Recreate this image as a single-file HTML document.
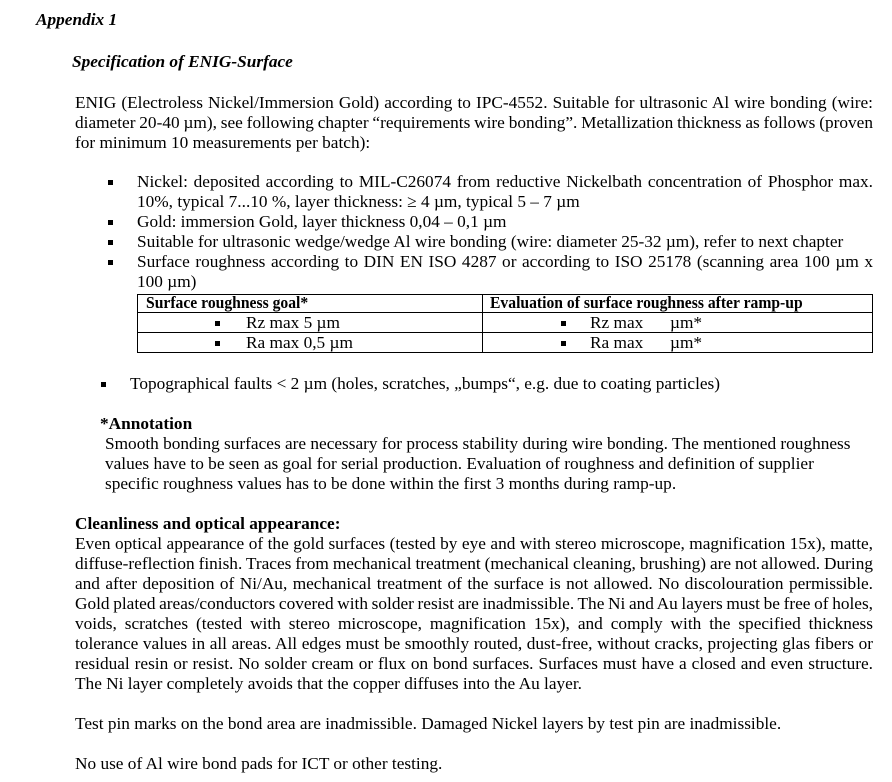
<!DOCTYPE html>
<html><head><meta charset="utf-8"><style>
body{margin:0;width:892px;height:782px;background:#fff;position:relative;overflow:hidden;font-family:"Liberation Serif",serif;font-size:17.3px;color:#000}
.l{position:absolute;white-space:nowrap;line-height:20px;height:20px}
.j{white-space:normal;text-align:justify;text-align-last:justify;overflow:hidden;word-spacing:-3px}
.b{position:absolute;width:5px;height:5px;background:#000}
.bi{font-weight:bold;font-style:italic}
.tb{position:absolute;left:137px;top:294px;width:736px;height:59px;border:1.5px solid #000;box-sizing:border-box}
.hl{position:absolute;left:137px;width:736px;height:0;border-top:1.5px solid #000}
.vl{position:absolute;left:482px;top:294px;height:59px;border-left:1.5px solid #000}
</style></head><body>
<div class="l bi" style="left:36px;top:10px">Appendix 1</div>
<div class="l bi" style="left:72px;top:52px">Specification of ENIG-Surface</div>

<div class="l j" style="left:75px;top:93px;width:798px">ENIG (Electroless Nickel/Immersion Gold) according to IPC-4552. Suitable for ultrasonic Al wire bonding (wire:</div>
<div class="l j" style="left:75px;top:113px;width:798px">diameter 20-40 µm), see following chapter “requirements wire bonding”. Metallization thickness as follows (proven</div>
<div class="l" style="left:75px;top:133px">for minimum 10 measurements per batch):</div>

<div class="b" style="left:108px;top:180px"></div>
<div class="l j" style="left:137px;top:172px;width:736px">Nickel: deposited according to MIL-C26074 from reductive Nickelbath concentration of Phosphor max.</div>
<div class="l" style="left:137px;top:192px">10%, typical 7...10 %, layer thickness: ≥ 4 µm, typical 5 – 7 µm</div>
<div class="b" style="left:108px;top:220px"></div>
<div class="l" style="left:137px;top:212px">Gold: immersion Gold, layer thickness 0,04 – 0,1 µm</div>
<div class="b" style="left:108px;top:240px"></div>
<div class="l" style="left:137px;top:232px">Suitable for ultrasonic wedge/wedge Al wire bonding (wire: diameter 25-32 µm), refer to next chapter</div>
<div class="b" style="left:108px;top:260px"></div>
<div class="l j" style="left:137px;top:252px;width:736px">Surface roughness according to DIN EN ISO 4287 or according to ISO 25178 (scanning area 100 µm x</div>
<div class="l" style="left:137px;top:272px">100 µm)</div>

<div class="tb"></div>
<div class="hl" style="top:312px"></div>
<div class="hl" style="top:332px"></div>
<div class="vl"></div>
<div class="l" style="left:146px;top:293px;font-weight:bold;font-size:17px"><span style="display:inline-block;transform:scaleX(0.92);transform-origin:left">Surface roughness goal*</span></div>
<div class="l" style="left:490px;top:293px;font-weight:bold;font-size:17px"><span style="display:inline-block;transform:scaleX(0.92);transform-origin:left">Evaluation of surface roughness after ramp-up</span></div>
<div class="b" style="left:215px;top:321px"></div>
<div class="l" style="left:246px;top:313px">Rz max 5 µm</div>
<div class="b" style="left:215px;top:341px"></div>
<div class="l" style="left:246px;top:333px">Ra max 0,5 µm</div>
<div class="b" style="left:561px;top:321px"></div>
<div class="l" style="left:590px;top:313px">Rz max</div>
<div class="l" style="left:670px;top:313px">µm*</div>
<div class="b" style="left:561px;top:341px"></div>
<div class="l" style="left:590px;top:333px">Ra max</div>
<div class="l" style="left:670px;top:333px">µm*</div>

<div class="b" style="left:101px;top:382px"></div>
<div class="l" style="left:130px;top:374px">Topographical faults &lt; 2 µm (holes, scratches, „bumps“, e.g. due to coating particles)</div>

<div class="l" style="left:100px;top:414px;font-weight:bold">*Annotation</div>
<div class="l" style="left:105px;top:434px">Smooth bonding surfaces are necessary for process stability during wire bonding. The mentioned roughness</div>
<div class="l" style="left:105px;top:454px">values have to be seen as goal for serial production. Evaluation of roughness and definition of supplier</div>
<div class="l" style="left:105px;top:474px">specific roughness values has to be done within the first 3 months during ramp-up.</div>

<div class="l" style="left:75px;top:514px;font-weight:bold">Cleanliness and optical appearance:</div>
<div class="l j" style="left:75px;top:534px;width:798px">Even optical appearance of the gold surfaces (tested by eye and with stereo microscope, magnification 15x), matte,</div>
<div class="l j" style="left:75px;top:554px;width:798px">diffuse-reflection finish. Traces from mechanical treatment (mechanical cleaning, brushing) are not allowed. During</div>
<div class="l j" style="left:75px;top:574px;width:798px">and after deposition of Ni/Au, mechanical treatment of the surface is not allowed. No discolouration permissible.</div>
<div class="l j" style="left:75px;top:594px;width:798px">Gold plated areas/conductors covered with solder resist are inadmissible. The Ni and Au layers must be free of holes,</div>
<div class="l j" style="left:75px;top:614px;width:798px">voids, scratches (tested with stereo microscope, magnification 15x), and comply with the specified thickness</div>
<div class="l j" style="left:75px;top:634px;width:798px">tolerance values in all areas. All edges must be smoothly routed, dust-free, without cracks, projecting glas fibers or</div>
<div class="l j" style="left:75px;top:654px;width:798px">residual resin or resist. No solder cream or flux on bond surfaces. Surfaces must have a closed and even structure.</div>
<div class="l" style="left:75px;top:674px">The Ni layer completely avoids that the copper diffuses into the Au layer.</div>

<div class="l" style="left:75px;top:714px">Test pin marks on the bond area are inadmissible. Damaged Nickel layers by test pin are inadmissible.</div>
<div class="l" style="left:75px;top:754px">No use of Al wire bond pads for ICT or other testing.</div>
</body></html>
